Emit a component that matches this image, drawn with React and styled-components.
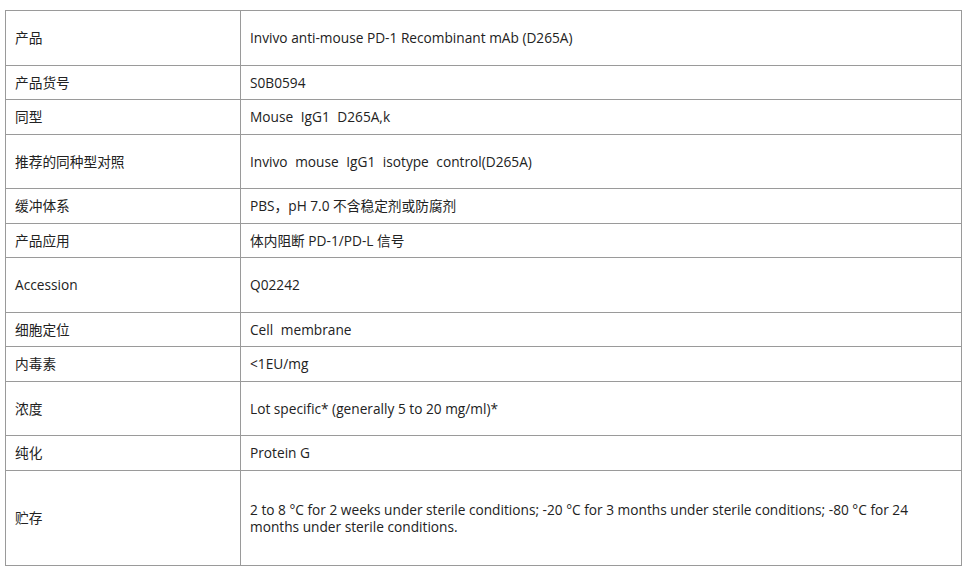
import React from "react";
import styled, { createGlobalStyle } from "styled-components";

const GlobalStyle = createGlobalStyle`
  html, body {
    margin: 0;
    padding: 0;
    background: #ffffff;
  }
  body {
    font-family: "Open Sans", "Noto Sans CJK SC", sans-serif;
  }
`;

const Page = styled.div`
  padding: 10px 8px 0 5px;
`;

const SpecTable = styled.table`
  width: 957px;
  border-collapse: collapse;
  table-layout: fixed;
  font-size: 13.7px;
  line-height: 17px;
  color: #222222;
`;

const heights = { s: "34.5px", m: "54.5px", l: "95px" };

const Row = styled.tr`
  height: ${(p) => heights[p.$size || "s"]};
`;

const LabelCol = styled.col`
  width: 235px;
`;

const Label = styled.td`
  border: 1px solid #9a9a9a;
  padding: 0 9px;
  vertical-align: middle;
`;

const Value = styled.td`
  border: 1px solid #9a9a9a;
  padding: 0 9px;
  vertical-align: middle;
  word-spacing: ${(p) => (p.$spaced ? "4px" : "0")};
`;

const rows = [
  { label: "产品", value: "Invivo anti-mouse PD-1 Recombinant mAb (D265A)", size: "m" },
  { label: "产品货号", value: "S0B0594" },
  { label: "同型", value: "Mouse IgG1 D265A,k", spaced: true },
  { label: "推荐的同种型对照", value: "Invivo mouse IgG1 isotype control(D265A)", size: "m", spaced: true },
  { label: "缓冲体系", value: "PBS，pH 7.0 不含稳定剂或防腐剂" },
  { label: "产品应用", value: "体内阻断 PD-1/PD-L 信号" },
  { label: "Accession", value: "Q02242", size: "m" },
  { label: "细胞定位", value: "Cell membrane", spaced: true },
  { label: "内毒素", value: "<1EU/mg" },
  { label: "浓度", value: "Lot specific* (generally 5 to 20 mg/ml)*", size: "m" },
  { label: "纯化", value: "Protein G" },
  {
    label: "贮存",
    value:
      "2 to 8 °C for 2 weeks under sterile conditions; -20 °C for 3 months under sterile conditions; -80 °C for 24 months under sterile conditions.",
    size: "l",
  },
];

export default function App() {
  return (
    <Page>
      <GlobalStyle />
      <SpecTable>
        <colgroup>
          <LabelCol />
          <col />
        </colgroup>
        <tbody>
          {rows.map((r) => (
            <Row key={r.label} $size={r.size}>
              <Label>{r.label}</Label>
              <Value $spaced={r.spaced}>{r.value}</Value>
            </Row>
          ))}
        </tbody>
      </SpecTable>
    </Page>
  );
}
